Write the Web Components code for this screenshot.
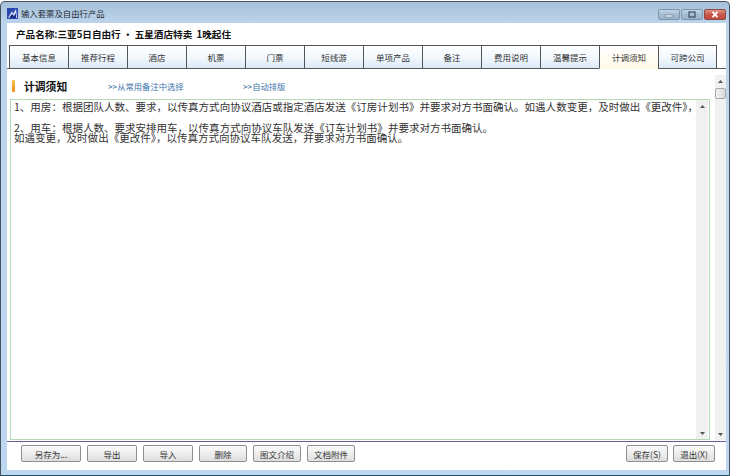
<!DOCTYPE html>
<html lang="zh">
<head>
<meta charset="utf-8">
<title>输入套票及自由行产品</title>
<style>
    html, body {
        margin: 0;
        height: 100%;
        background: #fff;
    }
    body {
        font-family: "Noto Sans CJK SC", "Liberation Sans", sans-serif;
        color: #222;
        overflow: hidden;
    }
</style>
</head>
<body>
<app-window>
    <title-bar slot="title">输入套票及自由行产品</title-bar>
    <product-name>产品名称:三亚5日自由行 · 五星酒店特卖&nbsp; 1晚起住</product-name>
    <tab-strip>
        <tab-item>基本信息</tab-item>
        <tab-item>推荐行程</tab-item>
        <tab-item>酒店</tab-item>
        <tab-item>机票</tab-item>
        <tab-item>门票</tab-item>
        <tab-item>短线游</tab-item>
        <tab-item>单项产品</tab-item>
        <tab-item>备注</tab-item>
        <tab-item>费用说明</tab-item>
        <tab-item>温馨提示</tab-item>
        <tab-item active>计调须知</tab-item>
        <tab-item>可跨公司</tab-item>
    </tab-strip>
    <note-panel>
        <note-head>计调须知</note-head>
        <note-editor>1、用房：根据团队人数、要求，以传真方式向协议酒店或指定酒店发送《订房计划书》并要求对方书面确认。如遇人数变更，及时做出《更改件》，

2、用车：根据人数、要求安排用车，以传真方式向协议车队发送《订车计划书》并要求对方书面确认。
如遇变更，及时做出《更改件》，以传真方式向协议车队发送，并要求对方书面确认。</note-editor>
    </note-panel>
    <action-bar>
        <action-button w="60">另存为...</action-button>
        <action-button w="50">导出</action-button>
        <action-button w="50">导入</action-button>
        <action-button w="48">删除</action-button>
        <action-button w="48">图文介绍</action-button>
        <action-button w="48">文档附件</action-button>
        <action-button slot="right" w="42">保存(S)</action-button>
        <action-button slot="right" w="42">退出(X)</action-button>
    </action-bar>
</app-window>

<script>
    class AppWindow extends HTMLElement {
        constructor() {
            super();
            this.attachShadow({ mode: 'open' });
            this.shadowRoot.innerHTML = `
                <style>
                    :host {
                        display: flex;
                        flex-direction: column;
                        box-sizing: border-box;
                        width: 730px;
                        height: 475px;
                        margin-top: 1px;
                        border: 1px solid #46525e;
                        border-bottom-color: #1d4a5c;
                        border-radius: 5px 5px 0 0;
                        background: linear-gradient(#a7c1da, #bcd5ec 22px, #bcd7f0);
                    }
                    .client {
                        flex: 1;
                        display: flex;
                        flex-direction: column;
                        min-height: 0;
                        margin: 0 3px 5px 6px;
                        background: #fff;
                    }
                </style>
                <slot name="title"></slot>
                <div class="client"><slot></slot></div>
            `;
        }
    }

    class TitleBar extends HTMLElement {
        constructor() {
            super();
            this.attachShadow({ mode: 'open' });
            this.shadowRoot.innerHTML = `
                <style>
                    :host {
                        display: flex;
                        align-items: center;
                        box-sizing: border-box;
                        height: 21px;
                        padding: 1px 3px 0 6px;
                        font-size: 8.4px;
                        color: #1f2a34;
                    }
                    .icon {
                        width: 11px;
                        height: 11px;
                        margin: 1px 3px 0 0;
                    }
                    .label { flex: 1; }
                    .btns { display: flex; gap: 1px; margin-top: 3px; }
                    .btn {
                        display: flex;
                        align-items: center;
                        justify-content: center;
                        box-sizing: border-box;
                        width: 22px;
                        height: 11px;
                        border: 1px solid #7d93a8;
                        border-radius: 2px;
                        background: linear-gradient(#c3d5e6, #a6bdd3 50%, #98b2cb);
                    }
                    .close {
                        border-color: #8c4a42;
                        background: linear-gradient(#dc9488, #c9574a 50%, #c44a3c);
                    }
                    svg { display: block; }
                </style>
                <svg class="icon" viewBox="0 0 11 11">
                    <rect width="11" height="11" fill="#2b47b0"/>
                    <path d="M1 10 L5 3 L6 6 L9 1 L10 10 Z" fill="#d7e2f7"/>
                    <path d="M2 10 L5 6 L7 8 L9 5 L9 10 Z" fill="#1c2f86"/>
                </svg>
                <span class="label"><slot></slot></span>
                <div class="btns">
                    <div class="btn">
                        <svg width="10" height="7" viewBox="0 0 10 7"><rect x="1" y="4" width="8" height="2" fill="#f2f6fa" stroke="#52657a" stroke-width=".5"/></svg>
                    </div>
                    <div class="btn">
                        <svg width="10" height="7" viewBox="0 0 10 7"><rect x="2" y="1" width="6" height="5" fill="none" stroke="#3d4e60" stroke-width="1.2"/></svg>
                    </div>
                    <div class="btn close">
                        <svg width="10" height="7" viewBox="0 0 10 7"><path d="M2.5 .8 L7.5 6.2 M7.5 .8 L2.5 6.2" stroke="#fff" stroke-width="1.8"/></svg>
                    </div>
                </div>
            `;
        }
    }

    class ProductName extends HTMLElement {
        constructor() {
            super();
            this.attachShadow({ mode: 'open' });
            this.shadowRoot.innerHTML = `
                <style>
                    :host {
                        display: flex;
                        align-items: center;
                        height: 22px;
                        padding-left: 9px;
                        font-size: 9.6px;
                        font-weight: 700;
                        color: #111;
                        white-space: nowrap;
                    }
                </style>
                <slot></slot>
            `;
        }
    }

    class TabStrip extends HTMLElement {
        constructor() {
            super();
            this.attachShadow({ mode: 'open' });
            this.shadowRoot.innerHTML = `
                <style>
                    :host {
                        display: flex;
                        box-sizing: border-box;
                        height: 24px;
                        padding-left: 2px;
                        border-bottom: 1px solid #5c5c5c;
                    }
                </style>
                <slot></slot>
            `;
        }
    }

    class TabItem extends HTMLElement {
        constructor() {
            super();
            this.attachShadow({ mode: 'open' });
            this.shadowRoot.innerHTML = `
                <style>
                    :host {
                        display: flex;
                        align-items: center;
                        justify-content: center;
                        box-sizing: border-box;
                        width: 59px;
                        height: 24px;
                        border: 1px solid #555;
                        border-right: 0;
                        border-bottom: 1px solid #5c5c5c;
                        background: linear-gradient(#fff, #f3f8fd 50%, #dbe9f6);
                        font-size: 8.5px;
                        color: #333;
                    }
                    :host(:last-child) { border-right: 1px solid #555; }
                    :host([active]) {
                        background: linear-gradient(#fff, #fff9e6);
                        border-bottom-color: #fff9e6;
                    }
                </style>
                <slot></slot>
            `;
        }
    }

    class NotePanel extends HTMLElement {
        constructor() {
            super();
            this.attachShadow({ mode: 'open' });
            this.shadowRoot.innerHTML = `
                <style>
                    :host {
                        display: flex;
                        flex: 1;
                        min-height: 0;
                    }
                    .main {
                        flex: 1;
                        display: flex;
                        flex-direction: column;
                        min-width: 0;
                        padding: 6px 0 1px 3px;
                    }
                    scroll-bar { width: 11px; margin: 6px 0 1px 7px; }
                </style>
                <div class="main"><slot></slot></div>
                <scroll-bar tall></scroll-bar>
            `;
        }
    }

    class NoteHead extends HTMLElement {
        constructor() {
            super();
            this.attachShadow({ mode: 'open' });
            this.shadowRoot.innerHTML = `
                <style>
                    :host {
                        display: flex;
                        align-items: center;
                        box-sizing: border-box;
                        height: 24px;
                        flex: none;
                        padding: 0 0 2px 2px;
                        white-space: nowrap;
                    }
                    .bar {
                        width: 3px;
                        height: 12px;
                        margin-right: 9px;
                        border-radius: 1px;
                        background: linear-gradient(#f7c44d, #ee8a12);
                    }
                    .name {
                        width: 84px;
                        font-size: 10.8px;
                        font-weight: 700;
                        color: #111;
                    }
                    a {
                        font-size: 8.3px;
                        color: #3d72ab;
                        text-decoration: none;
                    }
                    .pick { width: 135px; }
                </style>
                <span class="bar"></span>
                <span class="name"><slot></slot></span>
                <a class="pick">&gt;&gt;从常用备注中选择</a>
                <a>&gt;&gt;自动排版</a>
            `;
        }
    }

    class NoteEditor extends HTMLElement {
        constructor() {
            super();
            this.attachShadow({ mode: 'open' });
            this.shadowRoot.innerHTML = `
                <style>
                    :host {
                        display: flex;
                        flex: 1;
                        min-height: 0;
                        box-sizing: border-box;
                        width: 700px;
                        border: 1px solid #b4dab4;
                        background: #fff;
                    }
                    .text {
                        flex: 1;
                        min-width: 0;
                        padding: 2px 0 0 3px;
                        font-size: 10.52px;
                        line-height: 10.4px;
                        color: #333;
                        white-space: pre;
                        overflow: hidden;
                    }
                    scroll-bar { width: 12px; margin-right: 1px; }
                </style>
                <div class="text"><slot></slot></div>
                <scroll-bar></scroll-bar>
            `;
        }
    }

    class ScrollBar extends HTMLElement {
        constructor() {
            super();
            this.attachShadow({ mode: 'open' });
            this.shadowRoot.innerHTML = `
                <style>
                    :host {
                        display: flex;
                        flex-direction: column;
                        align-items: center;
                        flex: none;
                        background: #f0f0f0;
                    }
                    .arrow {
                        flex: none;
                        display: flex;
                        align-items: center;
                        justify-content: center;
                        width: 100%;
                        height: 12px;
                    }
                    .fill { flex: 1; }
                    .thumb {
                        display: none;
                        box-sizing: border-box;
                        width: 100%;
                        height: 11px;
                        margin-top: 1px;
                        border: 1px solid #a8a8a8;
                        border-radius: 2px;
                        background: linear-gradient(90deg, #f4f4f4, #d8d8d8);
                    }
                    :host([tall]) .thumb { display: block; }
                </style>
                <div class="arrow"><svg width="5" height="3" viewBox="0 0 5 3"><path d="M0 3 L2.5 0 L5 3 Z" fill="#555"/></svg></div>
                <div class="thumb"></div>
                <div class="fill"></div>
                <div class="arrow"><svg width="5" height="3" viewBox="0 0 5 3"><path d="M0 0 L2.5 3 L5 0 Z" fill="#555"/></svg></div>
            `;
        }
    }

    class ActionBar extends HTMLElement {
        constructor() {
            super();
            this.attachShadow({ mode: 'open' });
            this.shadowRoot.innerHTML = `
                <style>
                    :host {
                        display: flex;
                        flex: none;
                        box-sizing: border-box;
                        height: 29px;
                        padding: 3px 11px 0 14px;
                        border-top: 1px solid #5f5f9c;
                    }
                    .left, .right { display: flex; gap: 6px; }
                    .left { flex: 1; }
                    .right { gap: 5px; }
                </style>
                <div class="left"><slot></slot></div>
                <div class="right"><slot name="right"></slot></div>
            `;
        }
    }

    class ActionButton extends HTMLElement {
        constructor() {
            super();
            this.attachShadow({ mode: 'open' });
            this.shadowRoot.innerHTML = `
                <style>
                    :host {
                        display: flex;
                        align-items: center;
                        justify-content: center;
                        box-sizing: border-box;
                        height: 17px;
                        border: 1px solid #8f8f8f;
                        border-radius: 2px;
                        background: linear-gradient(#fbfbfb, #eeeeee 50%, #dddddd);
                        font-size: 8.5px;
                        color: #333;
                        white-space: nowrap;
                    }
                </style>
                <slot></slot>
            `;
        }

        connectedCallback() {
            this.style.width = this.getAttribute('w') + 'px';
        }
    }

    customElements.define('app-window', AppWindow);
    customElements.define('title-bar', TitleBar);
    customElements.define('product-name', ProductName);
    customElements.define('tab-strip', TabStrip);
    customElements.define('tab-item', TabItem);
    customElements.define('note-panel', NotePanel);
    customElements.define('note-head', NoteHead);
    customElements.define('note-editor', NoteEditor);
    customElements.define('scroll-bar', ScrollBar);
    customElements.define('action-bar', ActionBar);
    customElements.define('action-button', ActionButton);
</script>
</body>
</html>
